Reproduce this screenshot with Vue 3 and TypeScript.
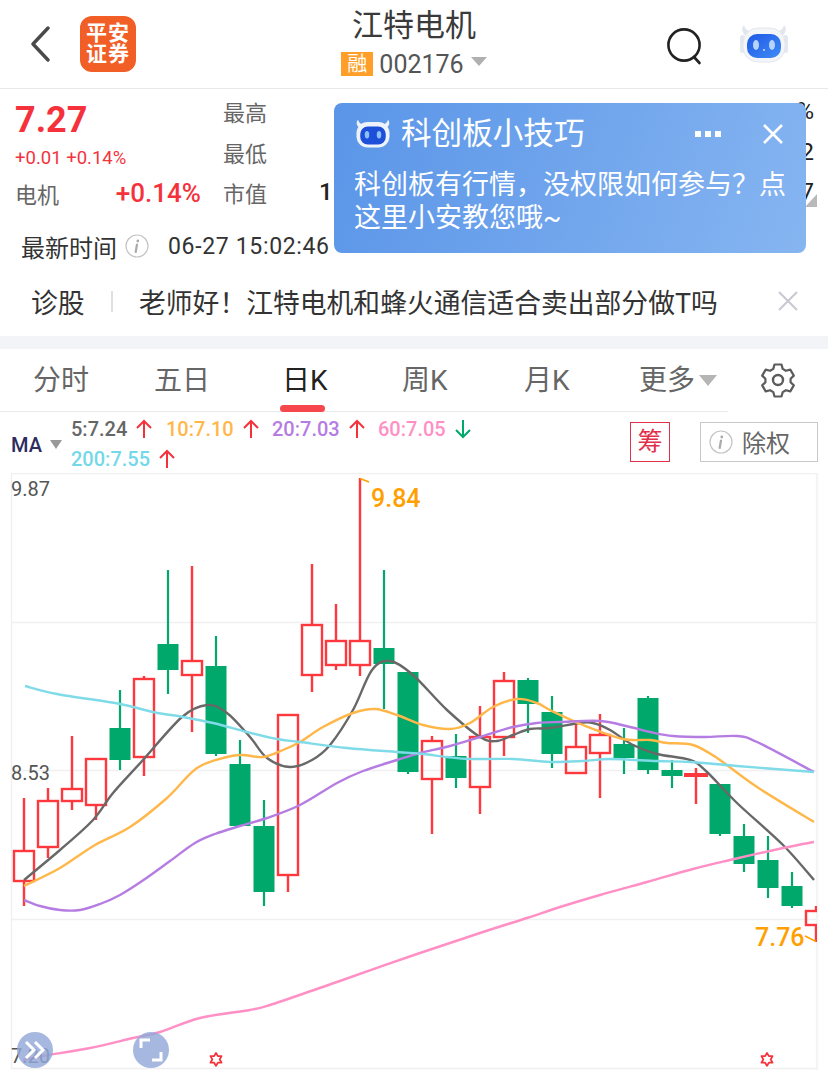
<script setup lang="ts">
type Candle = [number, number, number, number]

// [high, bodyTop, bodyBottom, low] in page pixels, one entry every 24px from x=24
const candles: { up: boolean; v: Candle }[] = [
  { up: true, v: [798, 850, 882, 906] },
  { up: true, v: [788, 800, 848, 858] },
  { up: true, v: [736, 788, 802, 810] },
  { up: true, v: [758, 758, 806, 820] },
  { up: false, v: [690, 728, 760, 770] },
  { up: true, v: [676, 678, 758, 776] },
  { up: false, v: [570, 644, 670, 694] },
  { up: true, v: [566, 660, 676, 732] },
  { up: false, v: [636, 666, 754, 756] },
  { up: false, v: [740, 764, 826, 826] },
  { up: false, v: [800, 826, 892, 906] },
  { up: true, v: [714, 714, 876, 892] },
  { up: true, v: [564, 624, 676, 692] },
  { up: true, v: [604, 640, 666, 670] },
  { up: true, v: [478, 640, 666, 676] },
  { up: false, v: [570, 648, 664, 709] },
  { up: false, v: [672, 672, 772, 774] },
  { up: true, v: [736, 740, 780, 834] },
  { up: false, v: [734, 756, 778, 788] },
  { up: true, v: [706, 736, 788, 814] },
  { up: true, v: [672, 680, 738, 756] },
  { up: false, v: [678, 680, 704, 733] },
  { up: false, v: [696, 712, 754, 768] },
  { up: true, v: [720, 746, 774, 774] },
  { up: true, v: [714, 734, 754, 798] },
  { up: false, v: [728, 744, 758, 774] },
  { up: false, v: [696, 698, 770, 774] },
  { up: false, v: [760, 770, 776, 788] },
  { up: true, v: [768, 773, 777, 804] },
  { up: false, v: [784, 784, 834, 836] },
  { up: false, v: [824, 836, 864, 872] },
  { up: false, v: [836, 860, 888, 898] },
  { up: false, v: [872, 886, 906, 908] },
  { up: true, v: [906, 910, 926, 942] },
]

const bars = candles.map((c, i) => ({ ...c, x: 24 + i * 24, solid: c.v[2] - c.v[1] < 6 }))

const ma5 = [[24, 880], [60, 850], [93, 820], [113, 793], [143, 760], [182, 717], [207, 705], [227, 713], [250, 737], [267, 758], [290, 767], [312, 760], [330, 745], [353, 710], [372, 670], [390, 661], [413, 675], [447, 710], [480, 737], [497, 741], [513, 735], [530, 729], [550, 728], [580, 723], [593, 723], [610, 730], [633, 745], [657, 754], [690, 760], [707, 772], [737, 803], [783, 845], [814, 880]]
const ma10 = [[24, 886], [60, 868], [95, 845], [130, 827], [167, 798], [197, 768], [227, 757], [243, 755], [263, 757], [283, 750], [300, 742], [323, 727], [353, 713], [375, 709], [397, 715], [423, 725], [450, 729], [470, 723], [493, 707], [517, 699], [537, 703], [550, 710], [583, 725], [623, 739], [650, 740], [667, 743], [693, 745], [717, 758], [757, 787], [814, 822]]
const ma20 = [[24, 900], [40, 906], [60, 910], [80, 910], [100, 904], [120, 895], [145, 879], [170, 861], [195, 843], [215, 834], [240, 826], [267, 818], [300, 805], [337, 783], [363, 771], [397, 760], [420, 753], [450, 746], [480, 737], [513, 727], [537, 723], [560, 722], [600, 721], [630, 727], [650, 732], [673, 736], [705, 737], [737, 736], [757, 742], [814, 772]]
const ma60 = [[23, 1060], [43, 1056], [90, 1048], [133, 1038], [160, 1032], [200, 1018], [250, 1010], [270, 1005], [317, 989], [337, 982], [417, 954], [483, 932], [527, 918], [560, 907], [600, 895], [647, 882], [693, 869], [730, 860], [783, 848], [814, 842]]
const ma200 = [[25, 686], [57, 694], [120, 704], [153, 712], [183, 717], [213, 723], [247, 732], [277, 739], [300, 742], [347, 748], [397, 752], [423, 754], [447, 757], [470, 759], [513, 759], [550, 762], [583, 761], [610, 759], [657, 761], [690, 762], [737, 766], [814, 772]]

// catmull-rom through the sampled points
function smooth(pts: number[][]): string {
  let d = `M${pts[0][0]} ${pts[0][1]}`
  for (let i = 0; i < pts.length - 1; i++) {
    const p0 = pts[Math.max(i - 1, 0)]
    const p1 = pts[i]
    const p2 = pts[i + 1]
    const p3 = pts[Math.min(i + 2, pts.length - 1)]
    const c1x = p1[0] + (p2[0] - p0[0]) / 6
    const c1y = p1[1] + (p2[1] - p0[1]) / 6
    const c2x = p2[0] - (p3[0] - p1[0]) / 6
    const c2y = p2[1] - (p3[1] - p1[1]) / 6
    d += `C${c1x.toFixed(1)} ${c1y.toFixed(1)} ${c2x.toFixed(1)} ${c2y.toFixed(1)} ${p2[0]} ${p2[1]}`
  }
  return d
}

const lines = [
  { color: '#686868', d: smooth(ma5) },
  { color: '#ffb74a', d: smooth(ma10) },
  { color: '#b57ce2', d: smooth(ma20) },
  { color: '#ff8fc5', d: smooth(ma60) },
  { color: '#7fdbe8', d: smooth(ma200) },
]

const tabs = [
  { name: '分时', w: 121 },
  { name: '五日', w: 128 },
  { name: '日K', w: 120, active: true },
  { name: '周K', w: 122 },
  { name: '月K', w: 115 },
]

const legend = [
  { text: '5:7.24', color: '#666666', w: 95, up: true },
  { text: '10:7.10', color: '#ffb74a', w: 106, up: true },
  { text: '20:7.03', color: '#b57ce2', w: 106, up: true },
  { text: '60:7.05', color: '#ff8fc5', w: 100, up: false },
  { text: '200:7.55', color: '#74d8e8', w: 110, up: true },
]

// full-width punctuation kept as escapes
const askText = '老师好\uFF01江特电机和蜂火通信适合卖出部分做T吗'
const tipText = '科创板有行情\uFF0C没权限如何参与\uFF1F点这里小安教您哦~'
</script>

<template>
  <div class="page">
    <header class="top">
      <svg class="back" width="20" height="36" viewBox="0 0 20 36">
        <path d="M18 2 3 18l15 16" fill="none" stroke="#4a4a4a" stroke-width="3.4" stroke-linecap="round" stroke-linejoin="round" />
      </svg>
      <div class="logo"><span>平安</span><span>证券</span></div>
      <div class="title">
        <div class="name">江特电机</div>
        <div class="code">
          <span class="rong">融</span>
          <span class="num">002176</span>
          <span class="tri"></span>
        </div>
      </div>
      <svg class="search" width="36" height="38" viewBox="0 0 36 38">
        <circle cx="17" cy="17" r="15.6" fill="none" stroke="#222" stroke-width="2.6" />
        <path d="M27 29l5.5 6" fill="none" stroke="#222" stroke-width="2.6" stroke-linecap="round" />
      </svg>
      <svg class="robot" width="50" height="40" viewBox="0 0 50 40">
        <defs>
          <linearGradient id="visor" x1="0" y1="0" x2="1" y2="1">
            <stop offset="0" stop-color="#1f57e6" />
            <stop offset="1" stop-color="#3f8df5" />
          </linearGradient>
        </defs>
        <path d="M5 1c-3 3-2 8 2 11l6-4C9 7 6 5 5 1ZM45 1c3 3 2 8-2 11l-6-4c4-1 7-3 8-7Z" fill="#e2e6ee" />
        <rect x="1" y="11" width="5" height="18" rx="2.5" fill="#e4e7ee" />
        <rect x="44" y="11" width="5" height="18" rx="2.5" fill="#e4e7ee" />
        <rect x="4" y="4" width="42" height="34" rx="15" fill="#f3f5f9" stroke="#e3e6ec" />
        <rect x="8" y="10" width="34" height="24" rx="10" fill="url(#visor)" />
        <ellipse cx="17" cy="21" rx="3" ry="5" fill="#b6d4fb" />
        <ellipse cx="33" cy="21" rx="3" ry="5" fill="#b6d4fb" />
        <circle cx="25" cy="26" r="1" fill="#cfe2fd" />
      </svg>
    </header>

    <section class="quote">
      <div class="left">
        <div class="price">7.27</div>
        <div class="change">+0.01 +0.14%</div>
        <div class="sector"><span>电机</span><b>+0.14%</b></div>
      </div>
      <div class="stats">
        <div class="row"><span class="label">最高</span><span class="edge">%</span></div>
        <div class="row"><span class="label">最低</span><span class="edge">2</span></div>
        <div class="row"><span class="label">市值</span><span class="val">1</span><span class="edge">7</span></div>
      </div>
      <span class="corner"></span>
    </section>

    <div class="time">
      <span class="t-label">最新时间</span>
      <svg class="info" width="24" height="24" viewBox="0 0 24 24">
        <circle cx="12" cy="12" r="11" fill="none" stroke="#c4c4c4" stroke-width="1.2" />
        <circle cx="12.8" cy="7" r="1.4" fill="#aaa" />
        <path d="M12 10.5l-1.3 7.5" stroke="#aaa" stroke-width="2.2" stroke-linecap="round" />
      </svg>
      <span class="t-val">06-27 15:02:46</span>
    </div>

    <div class="ask">
      <span class="ask-tag">诊股</span>
      <i class="ask-sep"></i>
      <span class="ask-text">{{ askText }}</span>
      <svg class="ask-x" width="22" height="22" viewBox="0 0 22 22">
        <path d="M2 2l18 18M20 2 2 20" stroke="#c9c8d2" stroke-width="2" />
      </svg>
    </div>

    <div class="band"></div>

    <nav class="tabs">
      <div class="tab-list">
        <span v-for="t in tabs" :key="t.name" class="tab" :class="{ on: t.active }" :style="{ width: t.w + 'px' }">{{ t.name }}</span>
        <span class="tab more">更多<i class="more-tri"></i></span>
      </div>
      <svg class="gear" width="36" height="36" viewBox="0 0 36 36">
        <path d="M14.5 2.5h7l1.2 4.4 3.2 1.9 4.4-1.2 3.5 6-3.2 3.2v3.4l3.2 3.2-3.5 6-4.4-1.2-3.2 1.9-1.2 4.4h-7l-1.2-4.4-3.2-1.9-4.4 1.2-3.5-6 3.2-3.2v-3.4l-3.2-3.2 3.5-6 4.4 1.2 3.2-1.9Z" fill="none" stroke="#5c5c5c" stroke-width="2.2" stroke-linejoin="round" />
        <circle cx="18" cy="18" r="5" fill="none" stroke="#5c5c5c" stroke-width="2.4" />
      </svg>
    </nav>

    <div class="ma-bar">
      <div class="ma-name">MA<i></i></div>
      <div class="legend">
        <span v-for="l in legend" :key="l.text" class="lg" :style="{ color: l.color, width: l.w + 'px' }">
          {{ l.text }}
          <svg width="18" height="20" viewBox="0 0 18 20" class="lg-arrow">
            <path v-if="l.up" d="M9 19V2M2 9l7-7 7 7" fill="none" stroke="#f5323c" stroke-width="2" />
            <path v-else d="M9 1v17M2 11l7 7 7-7" fill="none" stroke="#00a96b" stroke-width="2" />
          </svg>
        </span>
      </div>
      <span class="chip">筹</span>
      <div class="adjust">
        <svg width="24" height="24" viewBox="0 0 24 24">
          <circle cx="12" cy="12" r="11" fill="none" stroke="#c4c4c4" stroke-width="1.2" />
          <circle cx="12.8" cy="7" r="1.4" fill="#aaa" />
          <path d="M12 10.5l-1.3 7.5" stroke="#aaa" stroke-width="2.2" stroke-linecap="round" />
        </svg>
        <span>除权</span>
      </div>
    </div>

    <div class="chart">
      <svg width="828" height="597" viewBox="0 473 828 597">
        <defs>
          <clipPath id="plot"><rect x="11" y="473" width="806" height="597" /></clipPath>
        </defs>
        <path d="M11.5 473.5H817M11.5 622.5H817M11.5 770.5H817M11.5 919.5H817M11.5 1068.5H817M11.5 473V1069" stroke="#f0f0f2" stroke-width="1.4" fill="none" />
        <path d="M817 473v597" stroke="#f4f4f5" stroke-width="2.4" />
        <g clip-path="url(#plot)">
          <g v-for="b in bars" :key="b.x">
            <template v-if="b.up">
              <path :d="`M${b.x} ${b.v[0]}V${b.v[1]}M${b.x} ${b.v[2]}V${b.v[3]}`" stroke="#ff383e" stroke-width="2.4" />
              <rect v-if="b.solid" :x="b.x - 12" :y="b.v[1]" width="24" :height="b.v[2] - b.v[1]" fill="#ff383e" />
              <rect v-else :x="b.x - 10" :y="b.v[1] + 1" width="20" :height="b.v[2] - b.v[1] - 2" fill="none" stroke="#ff383e" stroke-width="2.4" />
            </template>
            <template v-else>
              <path :d="`M${b.x} ${b.v[0]}V${b.v[3]}`" stroke="#00a96b" stroke-width="2.2" />
              <rect :x="b.x - 10.5" :y="b.v[1]" width="21" :height="b.v[2] - b.v[1]" fill="#00a96b" />
            </template>
          </g>
          <path v-for="l in lines" :key="l.color" :d="l.d" fill="none" :stroke="l.color" stroke-width="2.4" />
          <path d="M360 478.5l9 3.5" stroke="#ffa000" stroke-width="1.6" fill="none" />
          <path d="M805 936l11 5.5" stroke="#ffa000" stroke-width="1.6" fill="none" />
        </g>
        <text class="axis" x="11" y="496">9.87</text>
        <text class="axis" x="11" y="780">8.53</text>
        <text class="axis" x="11" y="1063">7.20</text>
        <text class="peak" x="371" y="507">9.84</text>
        <text class="peak" x="755" y="946">7.76</text>
        <g v-for="sx in [216, 767]" :key="sx" fill="none" stroke="#f5323c" stroke-width="1.8" stroke-linejoin="round">
          <path :d="`M${sx} 1053l1.9 3.1h3.6l-1.8 3.3 1.8 3.3h-3.6l-1.9 3.1-1.9-3.1h-3.6l1.8-3.3-1.8-3.3h3.6Z`" />
        </g>
      </svg>
      <div class="fab fab-a">
        <svg width="24" height="20" viewBox="0 0 24 20">
          <path d="M3 2l8 8-8 8M12 2l8 8-8 8" fill="none" stroke="#fff" stroke-width="3" />
        </svg>
      </div>
      <div class="fab fab-b">
        <svg width="24" height="24" viewBox="0 0 24 24">
          <path d="M2 10V2h9M22 14v8h-9" fill="none" stroke="#fff" stroke-width="3" />
        </svg>
      </div>
    </div>

    <aside class="tip">
      <div class="tip-head">
        <svg width="38" height="30" viewBox="0 0 50 40">
          <path d="M5 1c-3 3-2 8 2 11l6-4C9 7 6 5 5 1ZM45 1c3 3 2 8-2 11l-6-4c4-1 7-3 8-7Z" fill="#eef2f9" />
          <rect x="3" y="4" width="44" height="34" rx="15" fill="#eef3fb" />
          <rect x="8" y="10" width="34" height="24" rx="10" fill="#1d4fd8" />
          <ellipse cx="17" cy="21" rx="3" ry="5" fill="#8cc0f8" />
          <ellipse cx="33" cy="21" rx="3" ry="5" fill="#8cc0f8" />
        </svg>
        <span class="tip-title">科创板小技巧</span>
        <span class="tip-dots"><i></i><i></i><i></i></span>
        <svg class="tip-x" width="24" height="24" viewBox="0 0 24 24">
          <path d="M3 3l18 18M21 3 3 21" stroke="#fff" stroke-width="2.6" />
        </svg>
      </div>
      <p class="tip-body">{{ tipText }}</p>
    </aside>
  </div>
</template>

<style scoped>
.page {
  position: relative;
  width: 828px;
  height: 1070px;
  overflow: hidden;
  background: #fff;
  font-family: Roboto, "Noto Sans CJK SC", sans-serif;
  color: #333;
}

.top {
  position: relative;
  display: flex;
  align-items: center;
  height: 88px;
  padding-left: 30px;
  border-bottom: 1px solid #e8e8e8;
}
.back { margin-right: 30px; }
.logo {
  width: 56px;
  height: 56px;
  border-radius: 12px;
  background: #f15f26;
  color: #fff;
  font-size: 21px;
  font-weight: 700;
  letter-spacing: 1px;
  line-height: 21px;
  display: flex;
  flex-direction: column;
  align-items: center;
  justify-content: center;
}
.title {
  position: absolute;
  left: 240px;
  right: 240px;
  top: 6px;
  text-align: center;
}
.name {
  font-size: 31px;
  line-height: 40px;
  color: #3a3a3a;
}
.code {
  display: flex;
  align-items: center;
  justify-content: center;
  height: 30px;
  margin-top: 3px;
}
.rong {
  width: 32px;
  height: 24px;
  background: #ff9f2a;
  color: #fff;
  font-size: 20px;
  line-height: 24px;
  text-align: center;
  margin-right: 6px;
}
.num {
  font-size: 25px;
  color: #555;
}
.tri {
  width: 0;
  height: 0;
  margin-left: 7px;
  margin-top: -6px;
  border-left: 8px solid transparent;
  border-right: 8px solid transparent;
  border-top: 9px solid #b0b0b0;
}
.search { margin-left: auto; margin-right: 36px; margin-top: 5px; }
.robot { margin-right: 39px; }

.quote {
  position: relative;
  display: flex;
  height: 135px;
  padding: 2px 14px 0 15px;
}
.left { width: 208px; margin-top: -1px; }
.price {
  font-size: 36px;
  font-weight: 700;
  line-height: 46px;
  margin-top: 7px;
  color: #f5323c;
}
.change {
  font-size: 18.5px;
  line-height: 24px;
  margin-top: 3px;
  color: #f5323c;
}
.sector {
  display: flex;
  justify-content: space-between;
  align-items: center;
  width: 186px;
  height: 40px;
  margin-top: 3px;
  font-size: 22px;
  color: #666;
}
.sector b {
  font-size: 26px;
  font-weight: 500;
  color: #f5323c;
}
.stats { flex: 1; }
.row {
  display: flex;
  align-items: center;
  height: 40.5px;
  font-size: 22px;
  color: #666;
}
.label { width: 96px; }
.val { color: #222; font-size: 24px; font-weight: 500; }
.edge { margin-left: auto; color: #222; font-size: 24px; }
.corner {
  position: absolute;
  right: 11px;
  top: 105px;
  border-left: 12px solid transparent;
  border-bottom: 13px solid #b9b9b9;
}

.time {
  display: flex;
  align-items: center;
  height: 40px;
  padding-left: 21px;
}
.t-label { font-size: 24px; width: 104px; }
.info { margin-right: 19px; }
.t-val { font-size: 23px; letter-spacing: 0.66px; }

.ask {
  display: flex;
  align-items: center;
  height: 70px;
  padding: 0 0 0 31px;
  font-size: 26.8px;
}
.ask-tag { width: 80px; }
.ask-sep {
  width: 2px;
  height: 21px;
  background: #e0e0e0;
  margin-right: 26px;
}
.ask-x { margin-left: auto; margin-right: 29px; }

.band { height: 13px; background: #f2f4f8; }

.tabs {
  position: relative;
  display: flex;
  align-items: center;
  height: 63px;
}
.tab-list {
  display: flex;
  align-items: center;
  width: 728px;
  height: 63px;
  padding: 0 0 4px 33px;
  box-sizing: border-box;
  border-bottom: 1px solid #eaeaea;
}
.tab {
  position: relative;
  font-size: 28px;
  color: #666;
  flex-shrink: 0;
}
.tab.on { color: #222; }
.tab.on::after {
  content: "";
  position: absolute;
  left: -2px;
  top: 47px;
  width: 45px;
  height: 7px;
  border-radius: 3.5px;
  background: #f5474c;
}
.more { display: flex; align-items: center; }
.more-tri {
  margin-left: 4px;
  margin-top: 4px;
  border-left: 9px solid transparent;
  border-right: 9px solid transparent;
  border-top: 11px solid #b5b5b5;
}
.gear { position: absolute; left: 760px; top: 13px; }

.ma-bar {
  position: relative;
  display: flex;
  height: 61px;
}
.ma-name {
  position: absolute;
  left: 11px;
  top: 21px;
  display: flex;
  align-items: center;
  font-size: 20px;
  font-weight: 500;
  color: #2d2d5f;
}
.ma-name i {
  margin-left: 8px;
  margin-top: -2px;
  border-left: 6px solid transparent;
  border-right: 6px solid transparent;
  border-top: 9px solid #999;
}
.legend {
  display: flex;
  flex-wrap: wrap;
  width: 410px;
  margin-left: 71px;
  padding-top: 2px;
}
.lg {
  display: inline-flex;
  align-items: center;
  height: 30px;
  font-size: 20px;
  font-weight: 500;
  white-space: nowrap;
}
.lg-arrow { margin-left: 8px; }
.chip {
  position: absolute;
  left: 630px;
  top: 10px;
  width: 40px;
  height: 40px;
  box-sizing: border-box;
  border: 1px solid #e0304a;
  color: #e0304a;
  font-size: 25px;
  line-height: 38px;
  text-align: center;
}
.adjust {
  position: absolute;
  left: 700px;
  top: 10px;
  display: flex;
  align-items: center;
  gap: 9px;
  width: 118px;
  height: 40px;
  box-sizing: border-box;
  padding-left: 8px;
  border: 1px solid #c8c8c8;
  font-size: 24px;
  color: #666;
}
.adjust span { margin-top: -2px; }

.chart {
  position: relative;
  height: 597px;
}
.chart svg { display: block; }
.axis { font-size: 20px; fill: #555; font-family: Roboto, sans-serif; }
.peak { font-size: 25px; font-weight: 500; fill: #ffa000; font-family: Roboto, sans-serif; }
.fab {
  position: absolute;
  top: 559px;
  width: 36px;
  height: 36px;
  border-radius: 50%;
  background: rgba(146, 168, 216, 0.82);
  display: flex;
  align-items: center;
  justify-content: center;
}
.fab-a { left: 17px; }
.fab-b { left: 133px; }

.tip {
  position: absolute;
  left: 334px;
  top: 103px;
  width: 472px;
  height: 150px;
  box-sizing: border-box;
  padding: 14px 20px;
  border-radius: 8px;
  background: linear-gradient(110deg, #5a95e8, #86b5f1);
  color: #fff;
}
.tip-head {
  display: flex;
  align-items: center;
  height: 34px;
}
.tip-title {
  margin-left: 9px;
  font-size: 30.6px;
  line-height: 34px;
}
.tip-dots {
  display: flex;
  gap: 4px;
  margin-left: auto;
  margin-right: 40px;
}
.tip-dots i {
  width: 6px;
  height: 6px;
  background: #fff;
}
.tip-x { margin-right: 1px; }
.tip-body {
  margin: 18px 0 0;
  font-size: 27px;
  line-height: 33px;
}
</style>
